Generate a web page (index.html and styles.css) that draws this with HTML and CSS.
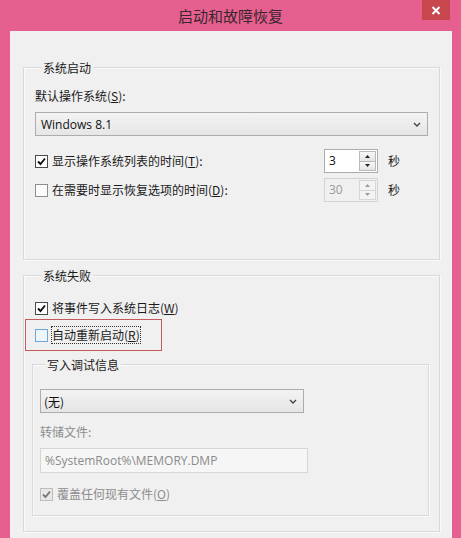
FILE: index.html
```html
<!DOCTYPE html>
<html lang="zh-CN">
<head>
<meta charset="utf-8">
<title>启动和故障恢复</title>
<link rel="stylesheet" href="styles.css">
</head>
<body>
<div class="window">
  <div class="titlebar">
    <span class="title">启动和故障恢复</span>
    <span class="close"><svg width="10" height="9" viewBox="0 0 10 9"><path d="M1.5 1 L8.5 8 M8.5 1 L1.5 8" stroke="#fff" stroke-width="2" fill="none"/></svg></span>
  </div>
  <div class="client">
    <div class="group g1">
      <div class="group-title">系统启动</div>
      <div class="label l-default">默认操作系统(<u>S</u>):</div>
      <div class="combo combo-os">
        <span class="combo-text">Windows 8.1</span>
        <svg class="chev" width="8" height="5" viewBox="0 0 8 5"><path d="M1 1 L4 4 L7 1" stroke="#444" stroke-width="1.4" fill="none"/></svg>
      </div>
      <div class="row row1">
        <div class="check">
          <span class="box checked"><svg width="11" height="11" viewBox="0 0 11 11"><path d="M2 5.5 L4.5 8 L9 2.5" stroke="#111" stroke-width="1.9" fill="none"/></svg></span>
          <span>显示操作系统列表的时间(<u>T</u>):</span>
        </div>
        <div class="spin-group">
          <div class="spin">
            <span class="spin-val">3</span>
            <div class="spin-btns">
              <span class="sb"><svg width="5" height="3" viewBox="0 0 5 3"><path d="M0 3 L2.5 0 L5 3Z" fill="#222"/></svg></span>
              <span class="sb"><svg width="5" height="3" viewBox="0 0 5 3"><path d="M0 0 L2.5 3 L5 0Z" fill="#222"/></svg></span>
            </div>
          </div>
          <span class="unit">秒</span>
        </div>
      </div>
      <div class="row row2">
        <div class="check">
          <span class="box"></span>
          <span>在需要时显示恢复选项的时间(<u>D</u>):</span>
        </div>
        <div class="spin-group">
          <div class="spin disabled">
            <span class="spin-val">30</span>
            <div class="spin-btns">
              <span class="sb"><svg width="5" height="3" viewBox="0 0 5 3"><path d="M0 3 L2.5 0 L5 3Z" fill="#9a9a9a"/></svg></span>
              <span class="sb"><svg width="5" height="3" viewBox="0 0 5 3"><path d="M0 0 L2.5 3 L5 0Z" fill="#9a9a9a"/></svg></span>
            </div>
          </div>
          <span class="unit">秒</span>
        </div>
      </div>
    </div>

    <div class="group g2">
      <div class="group-title">系统失败</div>
      <div class="check row-log">
        <span class="box checked"><svg width="11" height="11" viewBox="0 0 11 11"><path d="M2 5.5 L4.5 8 L9 2.5" stroke="#111" stroke-width="1.9" fill="none"/></svg></span>
        <span>将事件写入系统日志(<u>W</u>)</span>
      </div>
      <div class="highlight">
        <div class="check">
          <span class="box hover"></span>
          <span class="focus">自动重新启动(<u>R</u>)</span>
        </div>
      </div>
      <div class="group inner">
        <div class="group-title">写入调试信息</div>
        <div class="combo combo-dbg">
          <span class="combo-text cjk">(无)</span>
          <svg class="chev" width="8" height="5" viewBox="0 0 8 5"><path d="M1 1 L4 4 L7 1" stroke="#444" stroke-width="1.4" fill="none"/></svg>
        </div>
        <div class="label muted l-dump">转储文件:</div>
        <div class="textbox">%SystemRoot%\MEMORY.DMP</div>
        <div class="check disabled-check row-over">
          <span class="box checked dis"><svg width="11" height="11" viewBox="0 0 11 11"><path d="M2 5.5 L4.5 8 L9 2.5" stroke="#7a7a7a" stroke-width="1.9" fill="none"/></svg></span>
          <span>覆盖任何现有文件(<u>O</u>)</span>
        </div>
      </div>
    </div>
  </div>
</div>
</body>
</html>
```

FILE: styles.css
```css
html, body {
  margin: 0;
  padding: 0;
}
body {
  width: 461px;
  height: 538px;
  overflow: hidden;
  background: #e5608e;
  font-family: "Noto Sans CJK SC", "Noto Sans", sans-serif;
  font-size: 12px;
  color: #1a1a1a;
}
u {
  text-decoration: underline;
  text-underline-offset: 1px;
}
.window {
  width: 461px;
  height: 538px;
}
.titlebar {
  height: 31px;
  display: grid;
  grid-template-columns: 1fr auto 1fr;
}
.title {
  grid-column: 2;
  font-size: 15px;
  line-height: 31px;
  color: #3a2630;
}
.close {
  grid-column: 3;
  justify-self: end;
  align-self: start;
  margin-right: 11px;
  width: 28px;
  height: 20px;
  background: #c8474f;
  display: flex;
  align-items: center;
  justify-content: center;
}
.client {
  margin: 0 9px 0 10px;
  height: 507px;
  box-sizing: border-box;
  background: #f0f0f0;
  padding: 36px 12px 0 13px;
  overflow: hidden;
}
.group {
  border: 1px solid #d9d9d9;
  box-shadow: inset 1px 1px 0 #fafafa, 1px 1px 0 #fafafa;
  padding: 0 0 0 11px;
}
.group-title {
  width: max-content;
  margin: -8px 0 0 6px;
  padding: 0 2px;
  background: #f0f0f0;
  line-height: 16px;
}
.label {
  line-height: 16px;
}
.l-default {
  margin-top: 12px;
}
.muted {
  color: #8d8d8d;
}
.combo {
  display: flex;
  align-items: center;
  justify-content: space-between;
  height: 24px;
  box-sizing: border-box;
  border: 1px solid #acacac;
  background: linear-gradient(#f3f3f3, #e6e6e6);
  padding: 0 6px 0 5px;
}
.combo-text {
  font-family: "Open Sans", "Noto Sans", sans-serif;
  font-size: 12px;
  color: #111;
}
.combo-text.cjk {
  font-family: "Noto Sans CJK SC", sans-serif;
  font-size: 12px;
  margin-left: -2px;
}
.combo-os {
  margin-top: 8px;
  width: 393px;
}
.g1 {
  padding-right: 39px;
  padding-bottom: 57px;
}
.row {
  display: flex;
  align-items: center;
  height: 24px;
}
.row1 {
  margin-top: 13px;
}
.row2 {
  margin-top: 5px;
}
.check {
  display: flex;
  align-items: center;
  gap: 4px;
  line-height: 16px;
}
.box {
  width: 13px;
  height: 13px;
  box-sizing: border-box;
  border: 1px solid #8e8e8e;
  background: #fbfbfb;
  display: flex;
  align-items: center;
  justify-content: center;
  flex: none;
}
.box.checked {
  border-color: #4a4a4a;
  background: #fff;
}
.box.hover {
  border-color: #6fa7d6;
  background: #eef6fd;
}
.box.dis {
  border-color: #bdbdbd;
  background: #e8e8e8;
}
.disabled-check {
  color: #8d8d8d;
}
.spin-group {
  margin-left: auto;
  display: flex;
  align-items: center;
  gap: 10px;
}
.spin {
  width: 54px;
  height: 24px;
  box-sizing: border-box;
  border: 1px solid #acacac;
  background: #fff;
  display: flex;
  align-items: stretch;
}
.spin-val {
  flex: 1;
  padding-left: 4px;
  line-height: 22px;
  font-family: "Open Sans", "Noto Sans", sans-serif;
  font-size: 12px;
  color: #111;
}
.spin-btns {
  width: 17px;
  display: flex;
  flex-direction: column;
  padding: 1px 1px 1px 0;
}
.sb {
  flex: 1;
  border: 1px solid #b9b9b9;
  background: linear-gradient(#f7f7f7, #e4e4e4);
  display: flex;
  align-items: center;
  justify-content: center;
}
.sb + .sb {
  border-top: none;
}
.spin.disabled {
  background: #f0f0f0;
  border-color: #d3d3d3;
}
.spin.disabled .spin-val {
  color: #9a9a9a;
}
.spin.disabled .sb {
  border-color: #d6d6d6;
  background: #f3f3f3;
}
.unit {
  line-height: 16px;
}
.g2 {
  margin-top: 15px;
  padding-right: 11px;
  padding-bottom: 15px;
}
.row-log {
  margin-top: 16px;
}
.highlight {
  margin-top: 3px;
  margin-left: -10px;
  width: 137px;
  box-sizing: border-box;
  border: 1px solid #c55a5e;
  padding: 7px 9px;
}
.focus {
  outline: 1px dotted #333;
  outline-offset: 0;
}
.inner {
  margin-top: 13px;
  margin-left: -3px;
  width: 397px;
  box-sizing: border-box;
  padding-left: 7px;
  padding-bottom: 13px;
}
.inner .group-title {
  margin-left: 5px;
}
.combo-dbg {
  margin-top: 16px;
  width: 264px;
}
.l-dump {
  margin-top: 11px;
}
.textbox {
  margin-top: 8px;
  width: 268px;
  height: 25px;
  box-sizing: border-box;
  border: 1px solid #d6d6d6;
  background: #f6f6f6;
  padding-left: 4px;
  line-height: 23px;
  font-family: "Open Sans", "Noto Sans", sans-serif;
  font-size: 12px;
  color: #8a8a8a;
}
.row-over {
  margin-top: 13px;
}
```
